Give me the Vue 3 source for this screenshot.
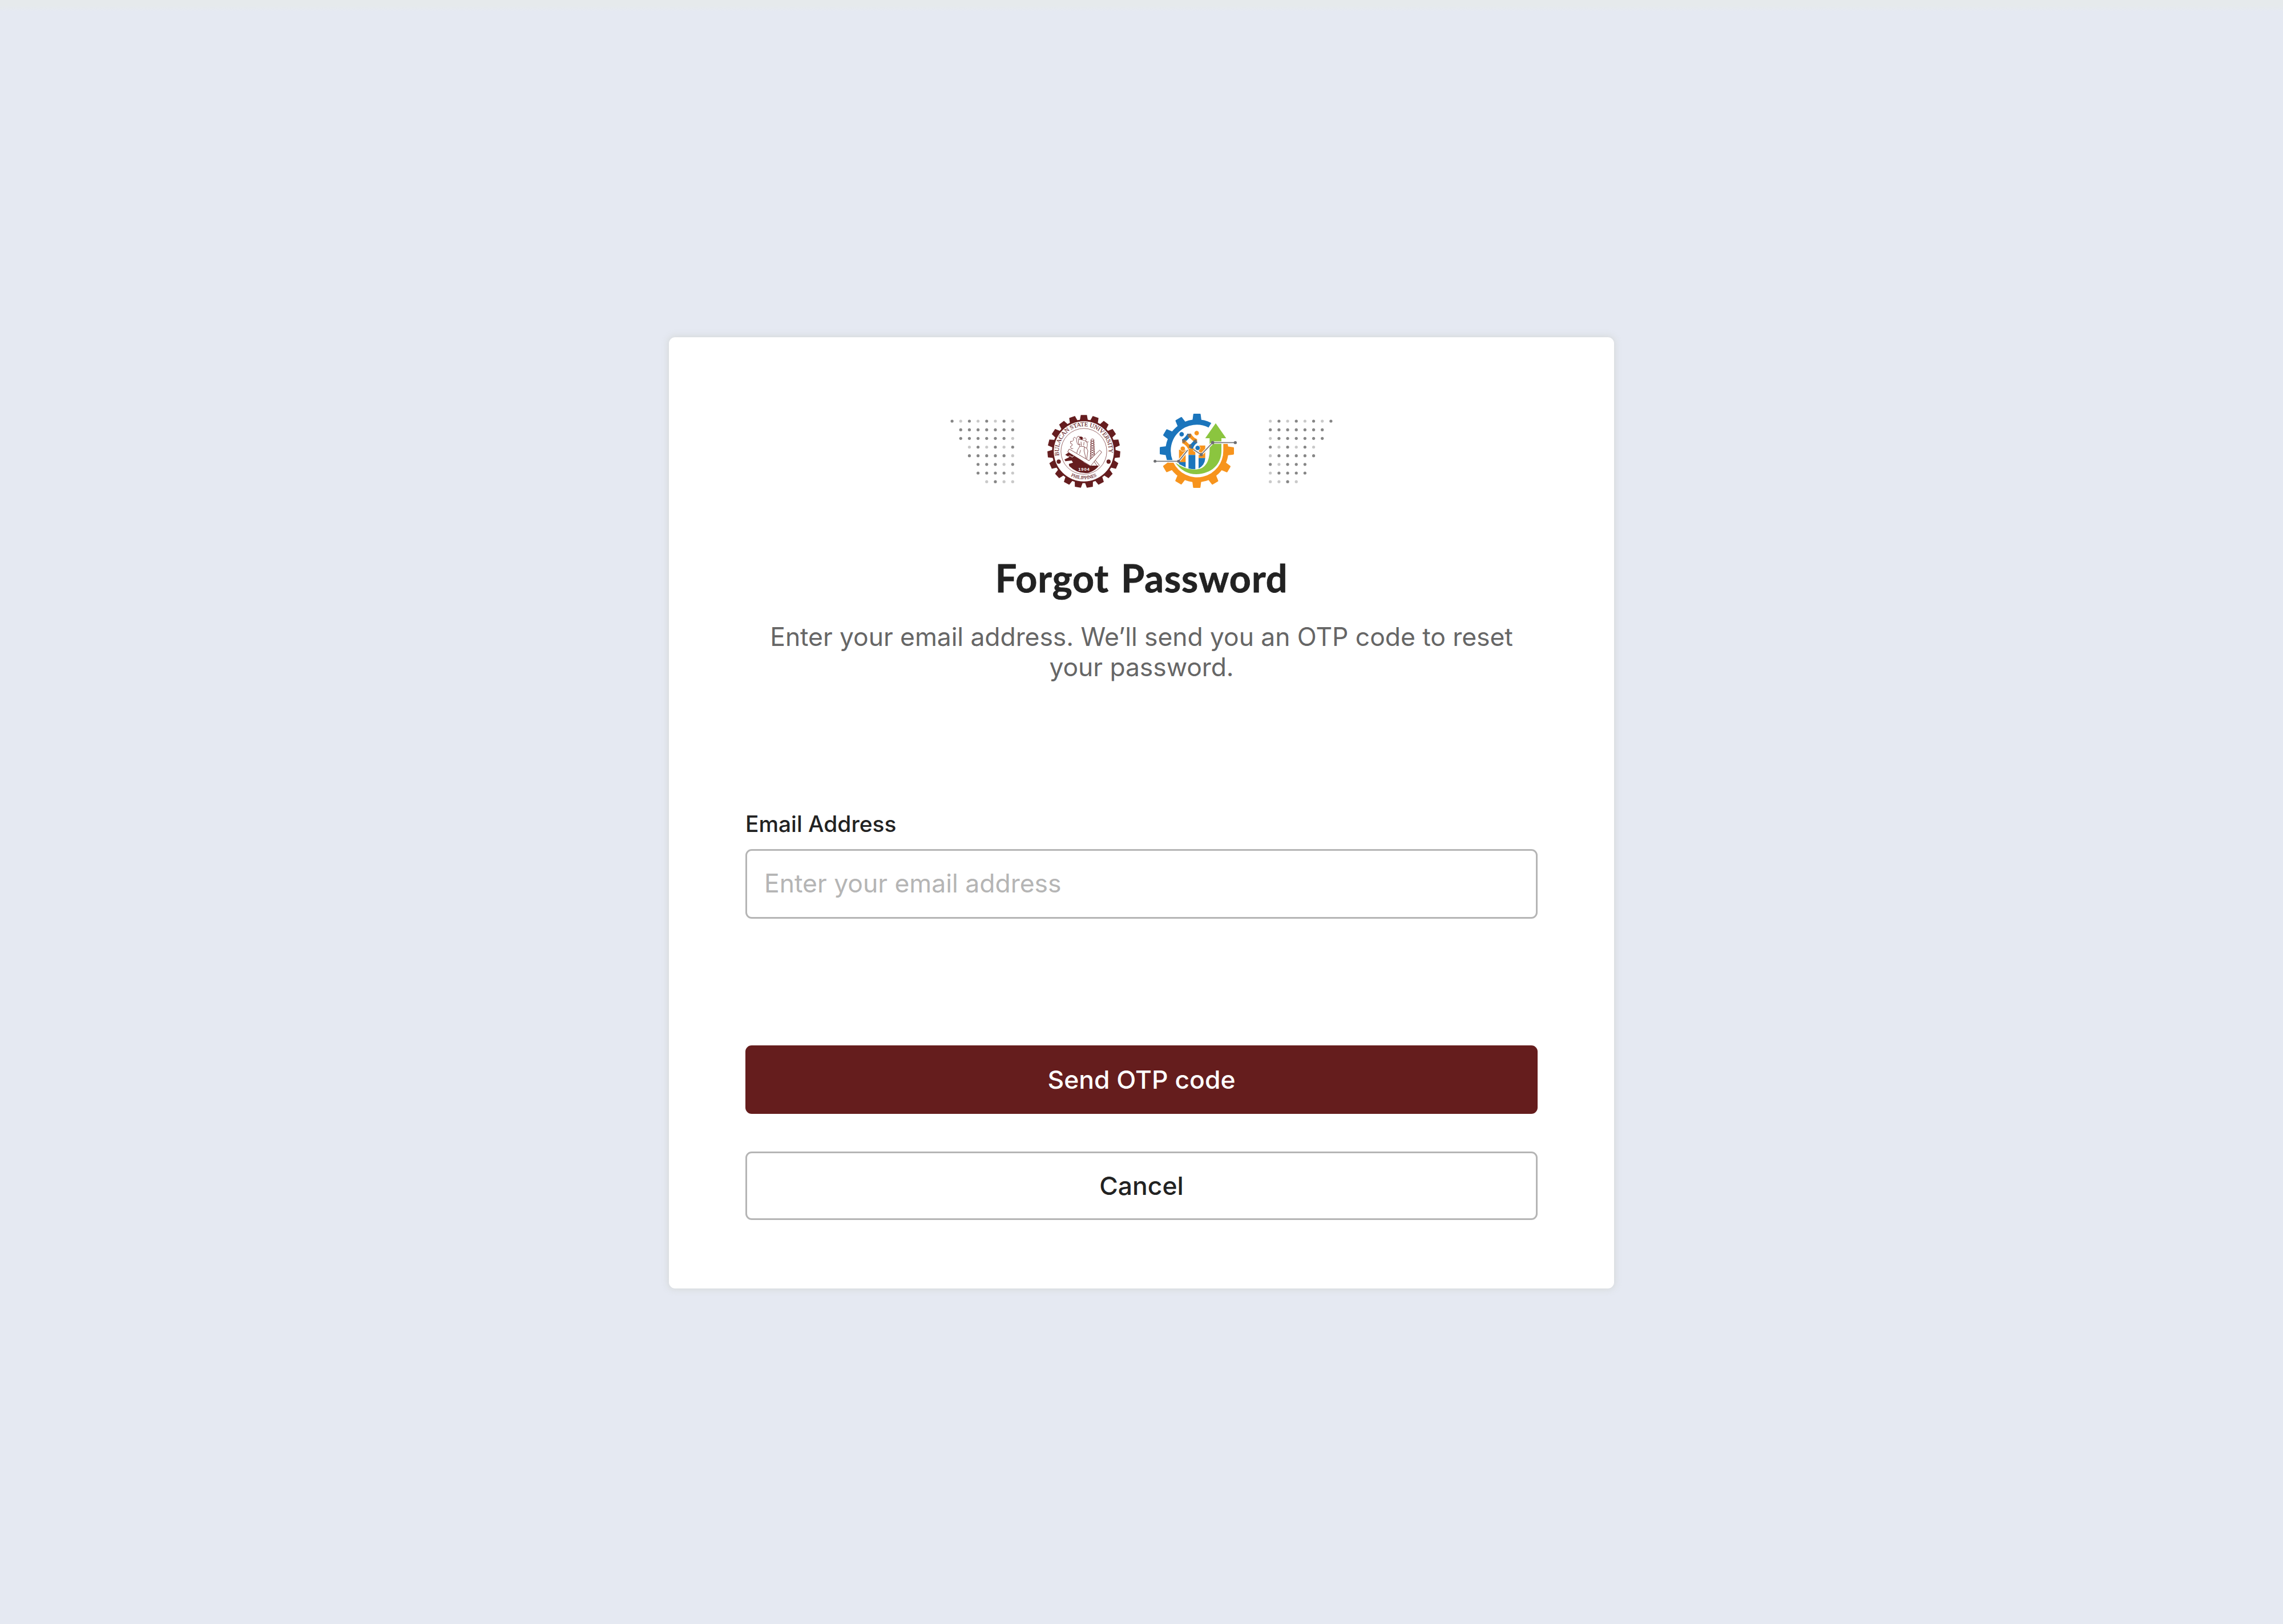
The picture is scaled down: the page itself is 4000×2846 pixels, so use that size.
<script setup>
import { ref } from 'vue'

const email = ref('')

// D = dark dot, L = light dot, . = empty
const pattern = [
  'DLDLDLDL',
  '.DDDDDDD',
  '.DDDDDDL',
  '..LDLDLD',
  '..DDDDDL',
  '...DDDLD',
  '...DDDDL',
  '....LDLL',
]

function dots(mirror, x0) {
  const out = []
  pattern.forEach((row, j) => {
    const cells = mirror ? [...row].reverse() : [...row]
    cells.forEach((c, i) => {
      if (c !== '.') out.push({ x: x0 + i * 15.17, y: 28 + j * 15.17, dark: c === 'D' })
    })
  })
  return out
}

const leftDots = dots(false, 8.1)
const rightDots = dots(true, 45.7)

const sealTeeth = Array.from({ length: 19 }, (_, i) => (i * 360) / 19)
const blueTeeth = [0, -30, -60, -90]
const orangeTeeth = [90, 120, 150, 180, 210, 240]
const braces = Array.from({ length: 9 }, (_, i) => 184 + i * 12)
</script>

<template>
  <main class="page">
    <section class="card">
      <div class="logos">
        <svg class="dots" viewBox="0 0 160 160">
          <circle v-for="(d, i) in leftDots" :key="i" :cx="d.x" :cy="d.y" r="2.6" :fill="d.dark ? '#868686' : '#c9c9c9'" />
        </svg>

        <svg class="seal" viewBox="0 0 480 480">
          <defs>
            <path id="seal-top" d="M107.500 265.500A131.500 131.500 0 1 1 366.500 265.500" />
            <path id="seal-bottom" d="M160 368A147 147 0 0 0 314 368" />
          </defs>
          <g fill="#651d1f">
            <path v-for="a in sealTeeth" :key="a" d="M221 52H253L259 84H215Z" :transform="`rotate(${a} 237 243)`" />
            <circle cx="237" cy="243" r="167" />
          </g>
          <circle cx="237" cy="243" r="158" fill="#fff" />
          <circle cx="237" cy="243" r="120.500" fill="none" stroke="#651d1f" stroke-width="2" />
          <g class="seal-text">
            <text font-size="32" textLength="446"><textPath href="#seal-top" textLength="446">BULACAN STATE UNIVERSITY</textPath></text>
            <text font-size="25"><textPath href="#seal-bottom" startOffset="50%" text-anchor="middle" textLength="142">PHILIPPINES</textPath></text>
          </g>
          <circle cx="105" cy="297" r="11" fill="#651d1f" />
          <circle cx="367" cy="297" r="11" fill="#651d1f" />
          <!-- cog and worker -->
          <g fill="none" stroke="#651d1f" stroke-width="2.200" stroke-linejoin="round">
            <path d="M196 176L188 168L181 176L184 183L177 190L167 190L167 201L175 204L175 213L166 218L171 229L181 228" />
            <path d="M234 176L244 172L250 180L246 187L254 194L262 193" />
            <path d="M204 205C198 190 197 178 203 166L212 163L214 172L210 180C222 182 238 182 250 192C258 200 256 214 252 226L258 240L252 284M210 180C206 192 210 206 216 216L204 236L200 252M216 216L240 218L238 240L248 280M222 192L224 214M238 194L236 212M204 206H220M252 226L240 222M220 236L214 256" />
          </g>
          <path d="M213 167Q224 162 232 170L230 182L220 180Z" fill="#651d1f" />
          <!-- lattice tower -->
          <g fill="none" stroke="#651d1f" stroke-width="2.400">
            <path d="M275 181L270 286M289 181L294 286M275 180Q282 174 289 180M246 320L272 286M320 318L294 286M258 319L284 286L306 318" />
            <path v-for="y in braces" :key="y" :d="`M272 ${y}L292 ${y + 11}M292 ${y}L272 ${y + 11}`" />
          </g>
          <!-- anvil and base -->
          <path d="M139 261L158 248L206 270L238 301L268 318H316Q299 344 262 356Q206 364 160 320L158 309L180 302L173 291L140 295L135 286L160 274Z" fill="#651d1f" />
          <path d="M137 279L164 266L176 274L188 262" fill="none" stroke="#fff" stroke-width="3" />
          <path d="M160 231L264 292L320 237L331 247L273 320L152 246Z" fill="#fff" stroke="#651d1f" stroke-width="2.400" />
          <text class="year" x="237" y="346" text-anchor="middle" textLength="58">1904</text>
        </svg>

        <svg class="gear" viewBox="0 0 510 480">
          <g fill="#1b75bc">
            <path v-for="a in blueTeeth" :key="a" d="M246 45H277Q281 45 281 49L285 80H238L242 49Q242 45 246 45Z" :transform="`rotate(${a} 261 240)`" />
            <path d="M104.300 292A165 165 0 0 1 336.800 93.500L322.500 117.500A137 137 0 0 0 134 292Z" />
          </g>
          <g fill="#f7941d">
            <path v-for="a in orangeTeeth" :key="a" d="M246 45H277Q281 45 281 49L285 80H238L242 49Q242 45 246 45Z" :transform="`rotate(${a} 261 240)`" />
            <path d="M107 302A166 166 0 0 0 423 204L400 204V240A138 138 0 0 1 138 302Z" />
          </g>
          <!-- bar chart -->
          <path d="M167 235H202V300H167ZM217 228H253V261H217ZM272 212H305V278H270Z" fill="#f7941d" />
          <path d="M167 299H202V327L167 310ZM217 262H253V337Q234 337 217 333ZM270 278H305Q303 315 270 333Z" fill="#1b75bc" />
          <!-- people -->
          <g fill="none" stroke-width="21">
            <path d="M187 190Q207 180 221 154" stroke="#1b75bc" />
            <path d="M221 154Q232 178 259 189" stroke="#f7941d" />
            <path d="M187 190Q212 200 224 225" stroke="#f7941d" />
            <path d="M259 189Q238 200 230 227" stroke="#1b75bc" />
          </g>
          <path d="M223 172L243 190L224 209L204 190Z" fill="#fff" />
          <path d="M214 150L229 149L230 166L221 172L214 164ZM183 183L197 181L202 190L196 199L184 196ZM250 181L263 185L262 197L249 198L245 190ZM220 208L227 204L235 211L231 229L219 222Z" fill="#75685b" opacity="0.8" />
          <g stroke="#fff" stroke-width="2.500">
            <circle cx="181" cy="153" r="13" fill="#1b75bc" />
            <circle cx="260" cy="147" r="13" fill="#f7941d" />
            <circle cx="265" cy="225" r="13" fill="#1b75bc" />
            <circle cx="187" cy="229" r="13" fill="#f7941d" />
          </g>
          <!-- growth arrow -->
          <path d="M148 302Q190 362 258 363C340 360 392 310 390 235V174H415L360 95L305 174H328V235C328 298 304 336 258 338C215 340 180 325 148 302Z" fill="#8bc53f" />
          <!-- trend line -->
          <g fill="none" stroke-linejoin="round">
            <path d="M41 295H165L213 236M244 234L284 260L344 197H463" stroke="#fff" stroke-width="13" />
            <path d="M41 295H165L213 236M244 234L284 260L344 197H463" stroke="#77787b" stroke-width="5.500" />
          </g>
          <g fill="#6d6e71">
            <circle cx="41" cy="295" r="7.500" />
            <circle cx="165" cy="295" r="8" />
            <circle cx="284" cy="260" r="8.500" />
            <circle cx="344" cy="197" r="8.500" />
            <circle cx="463" cy="197" r="8" />
          </g>
        </svg>

        <svg class="dots" viewBox="0 0 160 160">
          <circle v-for="(d, i) in rightDots" :key="i" :cx="d.x" :cy="d.y" r="2.6" :fill="d.dark ? '#868686' : '#c9c9c9'" />
        </svg>
      </div>

      <h1 class="title">Forgot Password</h1>
      <p class="lead">Enter your email address. We’ll send you an OTP code to reset your password.</p>

      <form class="form" @submit.prevent>
        <label class="label" for="email">Email Address</label>
        <input id="email" v-model="email" class="input" type="email" placeholder="Enter your email address" />
        <button class="btn primary" type="submit">Send OTP code</button>
        <button class="btn secondary" type="button">Cancel</button>
      </form>
    </section>
  </main>
</template>

<style>
body {
  background: #e5e9f2;
}
</style>

<style scoped>
.page {
  box-sizing: border-box;
  height: 2846px;
  padding-top: 591px;
  background: linear-gradient(#e6eaec 0, #e6eaec 10px, #e5e9f2 20px);
  font-family: Inter, "Liberation Sans", sans-serif;
  color: #222;
}
.card {
  box-sizing: border-box;
  width: 1656px;
  height: 1667px;
  margin: 0 auto;
  padding: 119px 134px 0;
  display: flex;
  flex-direction: column;
  background: #fff;
  border-radius: 11px;
  box-shadow: 0 0 11px 2px rgba(208, 211, 208, 0.7);
}
.logos {
  display: flex;
  justify-content: center;
  height: 160px;
}
.dots,
.seal {
  width: 160px;
  height: 160px;
}
.gear {
  width: 170px;
  height: 160px;
  margin-left: 30px;
}
.seal-text {
  font-family: "Liberation Serif", serif;
  fill: #651d1f;
  stroke: #651d1f;
  stroke-width: 0.4px;
}
.year {
  font: bold 23px "Liberation Sans", sans-serif;
  fill: #fff;
}
.title {
  margin: 103px 0 0;
  font-family: Lato, Inter, sans-serif;
  font-size: 66.3px;
  line-height: 80px;
  font-weight: 700;
  letter-spacing: 1px;
  word-spacing: 4px;
  text-align: center;
  -webkit-text-stroke: 0.8px #222;
}
.lead {
  margin: 37px 0 0;
  font-size: 44.44px;
  line-height: 53px;
  letter-spacing: -0.06px;
  text-align: center;
  color: #666;
}
.form {
  display: flex;
  flex-direction: column;
  margin-top: 224px;
}
.label {
  font-size: 38.9px;
  line-height: 47px;
  font-weight: 500;
}
.input {
  box-sizing: border-box;
  height: 122px;
  margin: 21px 0 222px;
  padding: 0 30px 2px;
  border: 3px solid #b5b5b5;
  border-radius: 11px;
  outline: none;
  background: #fff;
  font: 400 44.44px Inter, "Liberation Sans", sans-serif;
  color: #222;
}
.input::placeholder {
  color: #b5b5b5;
  opacity: 1;
}
.btn {
  box-sizing: border-box;
  height: 120px;
  padding: 0 0 1px;
  border: 3px solid #651d1d;
  border-radius: 11px;
  font: 500 44.44px Inter, "Liberation Sans", sans-serif;
}
.primary {
  background: #651d1d;
  color: #fff;
}
.secondary {
  margin-top: 66px;
  border-color: #b5b5b5;
  background: #fff;
  color: #222;
}
</style>
